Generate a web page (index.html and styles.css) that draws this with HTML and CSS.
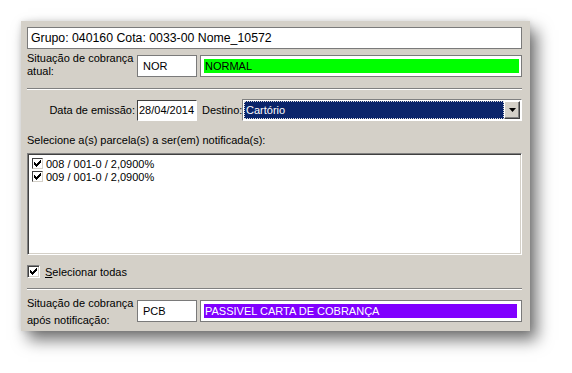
FILE: index.html
```html
<!DOCTYPE html>
<html>
<head>
<meta charset="utf-8">
<link rel="stylesheet" href="styles.css">
</head>
<body>
<div class="dialog">
  <div class="title-field">Grupo: 040160 Cota: 0033-00 Nome_10572</div>

  <div class="status-row">
    <div class="label2">Situação de cobrança<br>atual:</div>
    <div class="code-box">NOR</div>
    <div class="status-box"><div class="status-fill green">NORMAL</div></div>
  </div>

  <div class="sep"></div>

  <div class="date-row">
    <div class="date-label">Data de emissão:</div>
    <div class="date-box">28/04/2014</div>
    <div class="dest-label">Destino:</div>
    <div class="combo">
      <div class="combo-val"><span>Cartório</span></div>
      <div class="combo-btn"><svg width="7" height="4" viewBox="0 0 7 4"><path d="M0 0h7L3.5 4z" fill="#000"/></svg></div>
    </div>
  </div>

  <div class="select-label">Selecione a(s) parcela(s) a ser(em) notificada(s):</div>

  <div class="listbox">
    <div class="item"><span class="chk small"><svg width="7" height="7" viewBox="0 0 7 7"><path d="M0 2h1v1h1v1h1v-1h1v-1h1v-1h1v-1h1v3h-1v1h-1v1h-1v1h-1v1h-1v-1h-1v-1h-1z" fill="#000"/></svg></span>008 / 001-0 / 2,0900%</div>
    <div class="item"><span class="chk small"><svg width="7" height="7" viewBox="0 0 7 7"><path d="M0 2h1v1h1v1h1v-1h1v-1h1v-1h1v-1h1v3h-1v1h-1v1h-1v1h-1v1h-1v-1h-1v-1h-1z" fill="#000"/></svg></span>009 / 001-0 / 2,0900%</div>
  </div>

  <div class="select-all"><span class="chk big"><svg width="7" height="7" viewBox="0 0 7 7"><path d="M0 2h1v1h1v1h1v-1h1v-1h1v-1h1v-1h1v3h-1v1h-1v1h-1v1h-1v1h-1v-1h-1v-1h-1z" fill="#000"/></svg></span><span><u>S</u>elecionar todas</span></div>

  <div class="sep sep2"></div>

  <div class="status-row after">
    <div class="label2">Situação de cobrança<br>após notificação:</div>
    <div class="code-box">PCB</div>
    <div class="status-box"><div class="status-fill purple">PASSIVEL CARTA DE COBRANÇA</div></div>
  </div>
</div>
</body>
</html>
```

FILE: styles.css
```css
html, body {
  margin: 0;
  padding: 0;
  background: #fff;
}
body {
  font-family: "Liberation Sans", Arial, sans-serif;
  font-size: 11px;
  color: #000;
  min-height: 373px;
  padding: 21px 0 0 21px;
  box-sizing: border-box;
}
.dialog {
  width: 509px;
  height: 310px;
  box-sizing: border-box;
  background: #d4d0c8;
  padding: 6px 8px 0 6px;
  box-shadow: 7px 9px 15px rgba(0,0,0,0.55), 0 0 6px rgba(0,0,0,0.12);
  display: flex;
  flex-direction: column;
}
.title-field {
  height: 22px;
  box-sizing: border-box;
  border: 1px solid #7a7a7a;
  background: #fff;
  font-size: 12.3px;
  line-height: 20px;
  padding-left: 3px;
}
.status-row {
  display: flex;
  margin-top: 6px;
  height: 22px;
}
.label2 {
  width: 110px;
  line-height: 13px;
  margin-top: -3px;
}
.code-box {
  width: 60px;
  box-sizing: border-box;
  border: 1px solid #7a7a7a;
  background: #fff;
  padding-left: 5px;
  line-height: 20px;
}
.status-box {
  flex: 1;
  margin-left: 3px;
  box-sizing: border-box;
  border: 1px solid #7a7a7a;
  background: #fff;
  padding: 3px 2px 3px 3px;
  display: flex;
}
.status-fill {
  flex: 1;
  line-height: 14px;
  padding-left: 1px;
}
.green { background: #00ff00; color: #000; }
.purple { background: #8000ff; color: #fff; margin-right: 2px; }
.sep {
  margin-top: 11px;
  height: 0;
  border-top: 1px solid #808080;
  border-bottom: 1px solid #fff;
}
.date-row {
  display: flex;
  align-items: center;
  margin-top: 9px;
  height: 22px;
}
.date-label {
  width: 108px;
  text-align: right;
  padding-right: 2px;
}
.date-box {
  width: 60px;
  height: 21px;
  box-sizing: border-box;
  border: 1px solid #404040;
  border-right-color: #fff;
  border-bottom-color: #fff;
  background: #fff;
  line-height: 19px;
  padding-left: 1px;
}
.dest-label {
  margin-left: 5px;
  width: 40px;
}
.combo {
  flex: 1;
  height: 22px;
  box-sizing: border-box;
  border: 1px solid #808080;
  border-right-color: #fff;
  border-bottom-color: #fff;
  display: flex;
  background: #fff;
  padding: 1px;
}
.combo-val {
  flex: 1;
  background: #0a246a;
  color: #fff;
  border: 1px dotted #ddd;
  line-height: 16px;
  padding-left: 1px;
}
.combo-btn {
  width: 16px;
  box-sizing: border-box;
  background: #d4d0c8;
  border: 1px solid #fff;
  border-right-color: #404040;
  border-bottom-color: #404040;
  box-shadow: inset -1px -1px 0 #808080;
  display: flex;
  align-items: center;
  justify-content: center;
}
.select-label {
  margin-top: 13px;
  line-height: 13px;
}
.listbox {
  margin-top: 6px;
  height: 102px;
  box-sizing: border-box;
  background: #fff;
  border: 1px solid #808080;
  border-right-color: #fff;
  border-bottom-color: #fff;
  box-shadow: inset 1px 1px 0 #404040, inset -1px -1px 0 #d4d0c8;
  padding: 3px 0 0 4px;
}
.item {
  display: flex;
  align-items: center;
  height: 13px;
}
.chk {
  display: inline-flex;
  align-items: center;
  justify-content: center;
  box-sizing: border-box;
  background: #fff;
  margin-right: 3px;
}
.chk.small {
  width: 11px;
  height: 11px;
  border: 1px solid #404040;
  border-right-color: #d4d0c8;
  border-bottom-color: #d4d0c8;
}
.chk.big {
  width: 13px;
  height: 13px;
  border: 1px solid #808080;
  border-right-color: #fff;
  border-bottom-color: #fff;
  box-shadow: inset 1px 1px 0 #404040, inset -1px -1px 0 #d4d0c8;
  margin-right: 5px;
}
.select-all {
  display: flex;
  align-items: center;
  margin-top: 10px;
  height: 13px;
}
.sep2 {
  margin-top: 10px;
}
.status-row.after {
  margin-top: 10px;
}
.status-row.after .label2 {
  line-height: 17px;
  margin-top: -5px;
}
```
